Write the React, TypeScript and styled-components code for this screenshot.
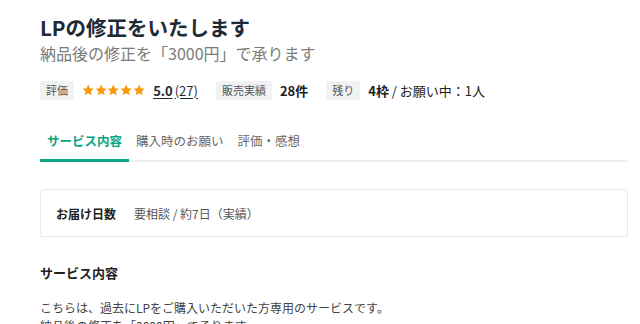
import React from "react";
import styled, { createGlobalStyle } from "styled-components";

const GlobalStyle = createGlobalStyle`
  html, body {
    margin: 0;
    padding: 0;
    background: #fff;
  }
  body {
    font-family: "Noto Sans CJK JP", "Noto Sans", sans-serif;
    color: #1f2d3d;
  }
`;

const Page = styled.div`
  width: 588px;
  padding: 13px 0 0 40px;
`;

const Title = styled.h1`
  margin: 0;
  font-size: 20.5px;
  line-height: 28px;
  font-weight: 700;
  color: #1f2a37;
`;

const Subtitle = styled.p`
  margin: 1px 0 0;
  font-size: 16px;
  line-height: 22px;
  color: #7b7b7b;
`;

const MetaRow = styled.div`
  display: flex;
  align-items: center;
  margin-top: 16px;
  height: 20px;
`;

const MetaGroup = styled.div<{ $gap?: number }>`
  display: flex;
  align-items: center;
  gap: ${({ $gap }) => $gap ?? 8}px;
  margin-right: 18px;
`;

const Tag = styled.span`
  display: inline-flex;
  align-items: center;
  height: 19px;
  padding: 0 6px;
  font-size: 11px;
  color: #555;
  background: #f1f2f4;
  border-radius: 2px;
`;

const Stars = styled.span`
  display: inline-flex;
  gap: 0.3px;
`;

const Rating = styled.a`
  font-size: 13px;
  color: #1f2a37;
  text-decoration: underline;
  text-underline-offset: 2px;
  b {
    font-weight: 600;
  }
  span {
    margin-left: 2px;
  }
`;

const Value = styled.span<{ $bold?: boolean }>`
  font-size: 13px;
  color: #222;
  font-weight: ${({ $bold }) => ($bold ? 700 : 400)};
  b {
    font-weight: 600;
  }
`;

const TabList = styled.div`
  display: flex;
  margin-top: 20px;
  border-bottom: 2px solid #efefef;
`;

const Tab = styled.div<{ $active?: boolean }>`
  padding: 12px 7px 9px;
  margin-bottom: -2px;
  font-size: 12.5px;
  line-height: 18px;
  font-weight: ${({ $active }) => ($active ? 700 : 400)};
  color: ${({ $active }) => ($active ? "#0aa583" : "#666")};
  border-bottom: 3px solid ${({ $active }) => ($active ? "#0aa583" : "transparent")};
`;

const InfoBox = styled.div`
  display: flex;
  align-items: center;
  gap: 18px;
  height: 46px;
  margin-top: 27px;
  padding: 0 15px;
  border: 1px solid #e8e8e8;
  border-radius: 3px;
  font-size: 12px;
`;

const InfoLabel = styled.span`
  font-weight: 700;
  color: #222;
`;

const InfoValue = styled.span`
  color: #555;
`;

const SectionHeading = styled.h2`
  margin: 26px 0 0;
  font-size: 13px;
  line-height: 20px;
  font-weight: 700;
  color: #222;
`;

const Paragraph = styled.p`
  margin: 16px 0 0;
  font-size: 12px;
  line-height: 18px;
  color: #444;
`;

const Star = () => (
  <svg width="12.4" height="12.4" viewBox="0 0 24 24">
    <path
      d="M12 1.2l3.2 7.1 7.7.7-5.9 5.1 1.8 7.6L12 17.8l-6.8 3.9 1.8-7.6-5.9-5.1 7.7-.7z"
      fill="#f79a0e"
    />
  </svg>
);

export default function App() {
  return (
    <>
      <GlobalStyle />
      <Page>
        <Title>LPの修正をいたします</Title>
        <Subtitle>納品後の修正を「3000円」で承ります</Subtitle>
        <MetaRow>
          <MetaGroup $gap={8}>
            <Tag>評価</Tag>
            <Stars>
              {[0, 1, 2, 3, 4].map((i) => (
                <Star key={i} />
              ))}
            </Stars>
            <Rating>
              <b>5.0</b>
              <span>(27)</span>
            </Rating>
          </MetaGroup>
          <MetaGroup>
            <Tag>販売実績</Tag>
            <Value $bold>28件</Value>
          </MetaGroup>
          <MetaGroup>
            <Tag>残り</Tag>
            <Value>
              <b>4枠</b> / お願い中：1人
            </Value>
          </MetaGroup>
        </MetaRow>
        <TabList>
          <Tab $active>サービス内容</Tab>
          <Tab>購入時のお願い</Tab>
          <Tab>評価・感想</Tab>
        </TabList>
        <InfoBox>
          <InfoLabel>お届け日数</InfoLabel>
          <InfoValue>要相談 / 約7日（実績）</InfoValue>
        </InfoBox>
        <SectionHeading>サービス内容</SectionHeading>
        <Paragraph>
          こちらは、過去にLPをご購入いただいた方専用のサービスです。
          <br />
          納品後の修正を「3000円」で承ります。
        </Paragraph>
      </Page>
    </>
  );
}
